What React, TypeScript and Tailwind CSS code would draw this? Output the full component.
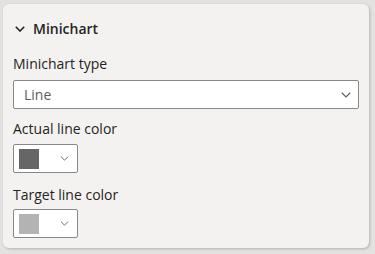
import React from "react";

function Chevron({ className = "", w = 9, h = 5, sw = 1.1 }: { className?: string; w?: number; h?: number; sw?: number }) {
  return (
    <svg width={w} height={h} viewBox="0 0 10 6" className={className} fill="none">
      <path d="M0.75 0.75 L5 5 L9.25 0.75" stroke="currentColor" strokeWidth={sw} />
    </svg>
  );
}

function ColorButton({ color }: { color: string }) {
  return (
    <div className="mt-[5px] flex h-[29px] w-[65px] items-center rounded-[2px] border border-[#8a8886] bg-white pl-[5px]">
      <div className="h-[20px] w-[20px]" style={{ backgroundColor: color }} />
      <Chevron className="ml-[21px] text-[#605e5c]" w={9} h={5} />
    </div>
  );
}

export default function App() {
  return (
    <div
      className="h-[254px] w-[375px] overflow-hidden bg-[#e3e2e1] pl-[3px] pt-[4px] text-[#252423]"
      style={{ fontFamily: '"Segoe UI", "Open Sans", "Noto Sans", sans-serif' }}
    >
      <div className="w-[366px] rounded-[6px] bg-[#f3f2f1] pb-[10px] pl-[10px] pr-[10px] pt-[15px] shadow-[1px_1px_3px_rgba(0,0,0,0.22)]">
        <div className="flex h-[20px] items-center">
          <Chevron className="ml-[2px] text-[#252423]" w={10} h={6} sw={1.6} />
          <span className="ml-[8px] text-[14px] font-semibold leading-[20px]">Minichart</span>
        </div>
        <div className="mt-[15px] text-[14px] leading-[20px]">Minichart type</div>
        <div className="mt-[6px] flex h-[29px] w-[346px] items-center justify-between rounded-[2px] border border-[#8a8886] bg-white pl-[10px] pr-[7px]">
          <span className="text-[14px] leading-[20px] text-[#605e5c]">Line</span>
          <Chevron className="text-[#605e5c]" w={10} h={6} />
        </div>
        <div className="mt-[10px] text-[14px] leading-[20px]">Actual line color</div>
        <ColorButton color="#666666" />
        <div className="mt-[12px] text-[14px] leading-[20px]">Target line color</div>
        <div className="-mt-[1px]">
          <ColorButton color="#b3b3b3" />
        </div>
      </div>
    </div>
  );
}
